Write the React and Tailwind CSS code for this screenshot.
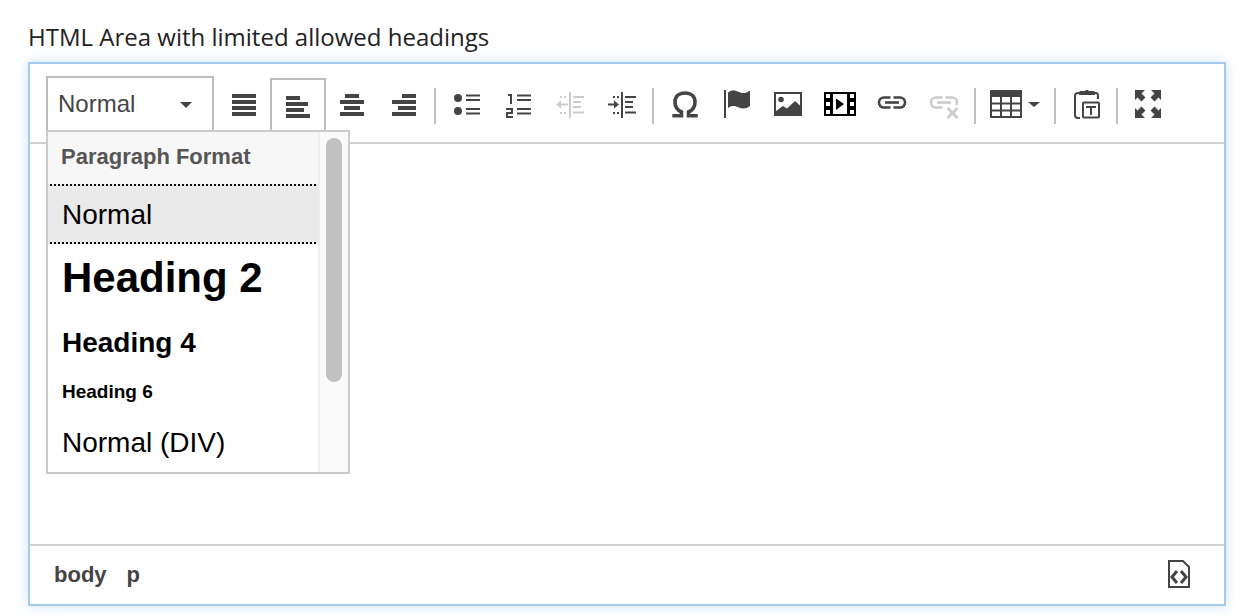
import React from "react";

const INK = "#444444";
const MUTED = "#cccccc";

function Icon({ children, color = INK }) {
  return (
    <svg width="32" height="32" viewBox="0 0 32 32" fill={color} stroke="none" className="block">
      {children}
    </svg>
  );
}

function Bars({ rows }) {
  return rows.map(([x, y, w], i) => <rect key={i} x={x} y={y} width={w} height="4" />);
}

function ListLines({ x = 15, w = 14 }) {
  return [6.5, 11, 20, 24.5].map((y) => <rect key={y} x={x} y={y} width={w} height="2" />);
}

function IndentBars({ x }) {
  return [8, 13, 18, 23.5].map((y, i) => (
    <rect key={y} x={x} y={y} width={i === 1 || i === 2 ? 8 : 11} height="2" />
  ));
}

function Dots({ x, y }) {
  return (
    <>
      <rect x={x} y={y} width="2" height="2" />
      <rect x={x + 4} y={y} width="2" height="2" />
    </>
  );
}

function LinkShape({ stroke }) {
  return (
    <g fill="none" stroke={stroke} strokeWidth="2.6">
      <path d="M14.500 9.500H8a5 5 0 0 0 0 10h6.500" />
      <path d="M17.500 9.500H24a5 5 0 0 1 0 10h-6.500" />
      <path d="M9 14.500h14" />
    </g>
  );
}

function Separator() {
  return <div className="w-[2px] h-9 mt-[12px] mx-[4px] bg-[#c0c0c0] shrink-0" />;
}

function ToolButton({ children }) {
  return (
    <div className="w-[52px] h-[52px] mt-[2px] flex items-center justify-center shrink-0">{children}</div>
  );
}

export default function App() {
  return (
    <div className="w-[1244px] h-[616px] bg-white px-[28px] pt-[20px] font-['Liberation_Sans',sans-serif] overflow-hidden">
      <div className="h-[42px] text-[24px] leading-[34px] text-[#222] font-['Open_Sans',sans-serif]">
        HTML Area with limited allowed headings
      </div>

      <div className="relative w-[1198px] border-2 border-[#a5caf1] shadow-[0_0_12px_rgba(110,175,240,0.35)] bg-white">
        {/* Toolbar */}
        <div className="flex items-start h-[80px] pl-[16px] pt-[12px] border-b-2 border-[#d2d2d2]">
          <div className="flex items-center justify-between w-[168px] h-[56px] border-2 border-[#bdbdbd] pl-[10px] pr-[20px] text-[24px] text-[#444] shrink-0">
            <span>Normal</span>
            <svg width="12" height="6" viewBox="0 0 12 6" fill={INK} className="mt-[2px]">
              <path d="M0 0h12L6 6z" />
            </svg>
          </div>

          <div className="w-[4px] shrink-0" />

          <ToolButton>
            <Icon>
              <Bars rows={[[4, 6, 24], [4, 12, 24], [4, 18, 24], [4, 24, 24]]} />
            </Icon>
          </ToolButton>

          <div className="w-[56px] h-[54px] mt-[2px] flex items-center justify-center border-2 border-b-0 border-[#bdbdbd] shrink-0">
            <Icon>
              <Bars rows={[[4, 6, 14], [4, 12, 22], [4, 18, 18], [4, 24, 24]]} />
            </Icon>
          </div>

          <ToolButton>
            <Icon>
              <Bars rows={[[9, 6, 14], [4, 12, 24], [8, 18, 16], [4, 24, 24]]} />
            </Icon>
          </ToolButton>

          <ToolButton>
            <Icon>
              <Bars rows={[[14, 6, 14], [4, 12, 24], [10, 18, 18], [4, 24, 24]]} />
            </Icon>
          </ToolButton>

          <Separator />

          <ToolButton>
            <Icon>
              <circle cx="8" cy="10" r="4" />
              <circle cx="8" cy="23" r="4" />
              <ListLines x={16} />
            </Icon>
          </ToolButton>

          <ToolButton>
            <Icon>
              <g fill="none" stroke={INK} strokeWidth="2">
                <path d="M6 7h3v9" />
                <path d="M4 21h6v4H5v4h6" />
              </g>
              <ListLines />
            </Icon>
          </ToolButton>

          <ToolButton>
            <Icon color={MUTED}>
              <rect x="15" y="4" width="2" height="26" />
              <IndentBars x={19} />
              <path d="M2 16.500l5-4v3h7v2H7v3z" />
              <Dots x={6} y={8} />
              <Dots x={6} y={24} />
            </Icon>
          </ToolButton>

          <ToolButton>
            <Icon>
              <rect x="15" y="4" width="2" height="26" />
              <IndentBars x={19} />
              <path d="M13 16.500l-5-4v3H2v2h6v3z" />
              <Dots x={7} y={8} />
              <Dots x={7} y={24} />
            </Icon>
          </ToolButton>

          <Separator />

          <ToolButton>
            <Icon>
              <path
                d="M4.300 27.800H13.500V24C9 22 7 18 7 14 7 8.500 11 5 17 5s10 3.500 10 9c0 4-2 8-6.500 10v3.800h9.200"
                fill="none"
                stroke={INK}
                strokeWidth="3.600"
              />
            </Icon>
          </ToolButton>

          <ToolButton>
            <Icon>
              <rect x="4" y="2" width="2" height="28" />
              <path d="M8 4.500C11 1.500 15.500 2 19 4c3.500 1.800 7.500 1.300 11-1.500V18c-3.500 2.800-7.500 3.200-11 1.500-3.500-2-8-2.500-11 .5z" />
            </Icon>
          </ToolButton>

          <ToolButton>
            <Icon>
              <rect x="3" y="5" width="26" height="22" fill="none" stroke={INK} strokeWidth="2" />
              <circle cx="9" cy="11.500" r="2.800" />
              <path d="M4 26v-3l7-5 4 2.500L23 13l5 4.500V26z" />
            </Icon>
          </ToolButton>

          <ToolButton>
            <Icon color="#000000">
              <path
                fillRule="evenodd"
                d="M0 4h32v24H0zM2 6v4h4V6zM2 14v4h4v-4zM2 22v4h4v-4zM26 6v4h4V6zM26 14v4h4v-4zM26 22v4h4v-4zM9 6v20h14V6z"
              />
              <path d="M12 10.500L20 16l-8 6z" />
            </Icon>
          </ToolButton>

          <ToolButton>
            <Icon>
              <LinkShape stroke={INK} />
            </Icon>
          </ToolButton>

          <ToolButton>
            <Icon color={MUTED}>
              <LinkShape stroke={MUTED} />
              <rect x="16" y="17" width="15" height="15" fill="white" />
              <path d="M18.500 21l2-2 4 4 4-4 2 2-4 4 4 4-2 2-4-4-4 4-2-2 4-4z" />
            </Icon>
          </ToolButton>

          <Separator />

          <div className="flex items-center w-[70px] h-[52px] mt-[2px] pl-[10px] shrink-0">
            <svg width="32" height="28" viewBox="0 0 32 28" className="block">
              <rect x="0" y="0" width="32" height="7" fill={INK} />
              <path d="M1 6v21h30V6M1 13.500h30M1 20.500h30M11 6v21M21 6v21" fill="none" stroke={INK} strokeWidth="2" />
            </svg>
            <svg width="12" height="5" viewBox="0 0 12 5" fill={INK} className="ml-[6px]">
              <path d="M0 0h12L6 5z" />
            </svg>
          </div>

          <Separator />

          <ToolButton>
            <Icon>
              <g fill="none" stroke={INK} strokeWidth="2">
                <path d="M9 5H8C6 5 5 6 5 8v19c0 2 1 3 3 3h2" />
                <path d="M25 5h1c1.500 0 2 1 2 3v3" />
                <rect x="13" y="14.500" width="16" height="15" rx="1" />
              </g>
              <path d="M11 3h4c.500-1.500 3.500-1.500 4 0h4c1 0 2 .500 2 2v2H9V5c0-1.500 1-2 2-2z" />
              <path d="M16 18h10v2h-4v7h-2v-7h-4z" />
            </Icon>
          </ToolButton>

          <Separator />

          <ToolButton>
            <Icon>
              <path d="M3 2h10L9.500 5.500l4 4-4 4-4-4L3 12z" />
              <path d="M29 2H19l3.500 3.500-4 4 4 4 4-4L29 12z" />
              <path d="M3 30h10l-3.500-3.500 4-4-4-4-4 4L3 20z" />
              <path d="M29 30H19l3.500-3.500-4-4 4-4 4 4L29 20z" />
            </Icon>
          </ToolButton>
        </div>

        {/* Editing area */}
        <div className="h-[400px]" />

        {/* Footer */}
        <div className="flex items-center justify-between h-[60px] pb-[2px] border-t-2 border-[#d2d2d2] pl-[24px] pr-[29px] text-[22px] font-bold text-[#444]">
          <div className="flex gap-[20px]">
            <span>body</span>
            <span>p</span>
          </div>
          <svg width="32" height="32" viewBox="0 0 32 32" fill="none" stroke={INK} strokeWidth="2">
            <path d="M6 3h14l6 6v20H6z" />
            <path d="M14 13l-5 6 5 6M18 13l5 6-5 6" strokeWidth="3" />
          </svg>
        </div>

        {/* Paragraph format dropdown */}
        <div className="absolute left-[16px] top-[66px] flex w-[304px] h-[344px] border-2 border-[#cccccc] bg-white text-black">
          <div className="flex-1 min-w-0">
            <div className="h-[52px] bg-[#f7f7f7] pl-[13px] text-[22px] leading-[50px] font-bold text-[#555]">
              Paragraph Format
            </div>
            <div className="h-[60px] bg-[#e9e9e9] relative pl-[14px] text-[28px] leading-[62px]">
              <div className="absolute left-[2px] right-[2px] top-0 border-t-2 border-dotted border-black" />
              Normal
              <div className="absolute left-[2px] right-[2px] bottom-0 border-t-2 border-dotted border-black" />
            </div>
            <div className="h-[68px] pl-[14px] text-[42px] leading-[68px] font-bold">Heading 2</div>
            <div className="h-[60px] pl-[14px] text-[28px] leading-[62px] font-bold">Heading 4</div>
            <div className="h-[40px] pl-[14px] text-[19px] leading-[40px] font-bold">Heading 6</div>
            <div className="h-[60px] pl-[14px] text-[28px] leading-[62px]">Normal (DIV)</div>
          </div>
          <div className="w-[30px] border-l-2 border-[#eeeeee] bg-[#fafafa] pt-[6px] pl-[6px] shrink-0">
            <div className="w-[16px] h-[244px] rounded-full bg-[#c1c1c1]" />
          </div>
        </div>
      </div>
    </div>
  );
}
